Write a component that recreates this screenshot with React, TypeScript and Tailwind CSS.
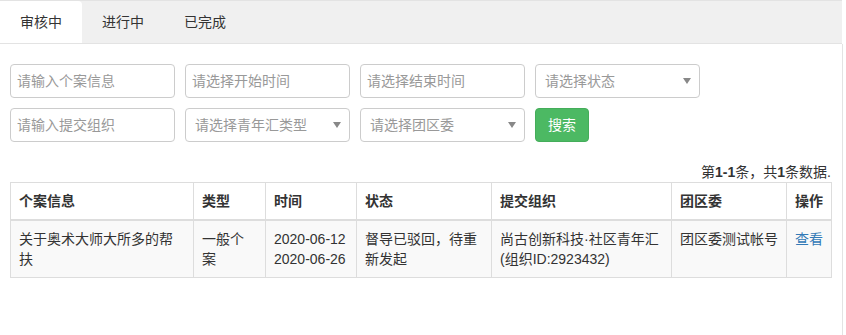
import * as React from 'react'

const tabs = ['审核中', '进行中', '已完成']

function Caret() {
  return (
    <svg width="8" height="6" viewBox="0 0 8 6" className="shrink-0">
      <path d="M0 0h8L4 6z" fill="#888" />
    </svg>
  )
}

function TextInput({ placeholder }: { placeholder: string }) {
  return (
    <input
      placeholder={placeholder}
      className="w-[165px] h-[34px] px-[6px] rounded border border-[#ccc] text-sm text-[#555] placeholder:text-[#999] outline-none"
    />
  )
}

function SelectBox({ placeholder }: { placeholder: string }) {
  return (
    <div className="w-[165px] h-[34px] pl-[9px] pr-[8px] rounded border border-[#ccc] flex items-center justify-between text-sm text-[#999]">
      <span>{placeholder}</span>
      <Caret />
    </div>
  )
}

interface Col {
  title: string
  width: string
}

const cols: Col[] = [
  { title: '个案信息', width: 'w-[183px]' },
  { title: '类型', width: 'w-[72px]' },
  { title: '时间', width: 'w-[91px]' },
  { title: '状态', width: 'w-[135px]' },
  { title: '提交组织', width: 'w-[180px]' },
  { title: '团区委', width: 'w-[115px]' },
  { title: '操作', width: 'w-[45px]' },
]

export default function App() {
  return (
    <div
      className="w-[843px] min-h-[335px] bg-white text-[#333] text-sm leading-5"
      style={{ fontFamily: '"Liberation Sans", "Noto Sans CJK SC", sans-serif' }}
    >
      {/* tabs */}
      <div className="h-[44px] w-[842px] flex bg-[#f0f0f0] border-t border-b border-[#e3e3e3]">
        {tabs.map((t, i) => (
          <div
            key={t}
            className={
              i === 0
                ? 'px-5 flex items-center bg-white rounded-tr-sm'
                : 'px-5 flex items-center'
            }
          >
            {t}
          </div>
        ))}
      </div>

      <div className="border-r border-[#e3e3e3] min-h-[291px] pl-[10px] pr-[11px] pt-5">
        {/* filters */}
        <div className="flex flex-col gap-[10px]">
          <div className="flex gap-[10px]">
            <TextInput placeholder="请输入个案信息" />
            <TextInput placeholder="请选择开始时间" />
            <TextInput placeholder="请选择结束时间" />
            <SelectBox placeholder="请选择状态" />
          </div>
          <div className="flex gap-[10px]">
            <TextInput placeholder="请输入提交组织" />
            <SelectBox placeholder="请选择青年汇类型" />
            <SelectBox placeholder="请选择团区委" />
            <button className="w-[54px] h-[34px] rounded bg-[#4cb963] border border-[#45ad5a] text-white text-sm">
              搜索
            </button>
          </div>
        </div>

        {/* summary */}
        <div className="mt-5 text-right">
          第<b>1-1</b>条，共<b>1</b>条数据.
        </div>

        {/* table */}
        <table className="w-[821px] table-fixed border-collapse border border-[#ddd]">
          <thead>
            <tr>
              {cols.map((c) => (
                <th
                  key={c.title}
                  className={`${c.width} text-left font-bold px-2 py-2 border border-[#ddd] border-b-2`}
                >
                  {c.title}
                </th>
              ))}
            </tr>
          </thead>
          <tbody>
            <tr className="bg-[#f9f9f9] align-top">
              <td className="p-2 border border-[#ddd]">关于奥术大师大所多的帮扶</td>
              <td className="p-2 border border-[#ddd]">一般个案</td>
              <td className="p-2 border border-[#ddd]">
                2020-06-12
                <br />
                2020-06-26
              </td>
              <td className="p-2 border border-[#ddd]">督导已驳回，待重新发起</td>
              <td className="p-2 border border-[#ddd]">尚古创新科技·社区青年汇(组织ID:2923432)</td>
              <td className="p-2 border border-[#ddd]">团区委测试帐号</td>
              <td className="p-2 border border-[#ddd]">
                <a className="text-[#337ab7]">查看</a>
              </td>
            </tr>
          </tbody>
        </table>
      </div>
    </div>
  )
}
